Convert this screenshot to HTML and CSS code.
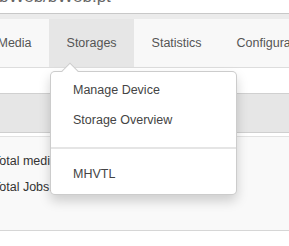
FILE: index.html
```html
<!DOCTYPE html>
<html lang="en">
<head>
  <meta charset="UTF-8">
  <title>Storages</title>
  <link rel="stylesheet" href="styles.css">
</head>
<body>
  <div class="title"><span>bWeb/bWeb.pt</span></div>
  <div class="topline"></div>

  <ul class="nav">
    <li class="tab">Media</li>
    <li class="tab active">Storages</li>
    <li class="tab">Statistics</li>
    <li class="tab">Configuration</li>
  </ul>

  <div class="content">
    <div class="panel-head"></div>
    <div class="panel-body">
      <div class="stat">Total media:</div>
      <div class="stat">Total Jobs:</div>
    </div>
  </div>

  <!-- open Storages menu -->
  <div class="dropdown">
    <span class="caret"></span>
    <a class="item">Manage Device</a>
    <a class="item">Storage Overview</a>
    <div class="divider"></div>
    <a class="item">MHVTL</a>
  </div>
</body>
</html>
```

FILE: styles.css
```css
body {
  margin: 0;
  font-family: "Liberation Sans", Arial, sans-serif;
  font-size: 12.5px;
  color: #333;
  background: #fff;
  overflow: hidden;
}

.title {
  height: 13px;
  overflow: hidden;
}

.title span {
  display: block;
  margin-top: -13px;
  margin-left: -1px;
  font-size: 17px;
  line-height: 20px;
  color: #666;
}

.topline {
  height: 5px;
  border-top: 1px solid #c8c8c8;
  background: #ebebeb;
}

.nav {
  display: flex;
  margin: 0 0 0 -20px;
  padding: 0;
  list-style: none;
  height: 48px;
  background: #f8f8f8;
  border-bottom: 1px solid #ddd;
  white-space: nowrap;
}

.tab {
  padding: 0 17.5px;
  line-height: 48px;
  color: #555;
}

.tab.active {
  background: #e6e6e6;
}

.content {
  padding-top: 25px;
}

.panel-head {
  height: 38px;
  background: #e6e6e6;
  border-top: 1px solid #d0d0d0;
  border-bottom: 1px solid #cfcfcf;
}

.panel-body {
  margin-top: 3px;
  height: 95px;
  padding-top: 11px;
  background: #f9f9f9;
  border-top: 1px solid #e2e2e2;
  border-bottom: 1px solid #d6d6d6;
  box-sizing: border-box;
}

.stat {
  margin-left: -7px;
  line-height: 26px;
  color: #333;
}

.dropdown {
  position: absolute;
  left: 50px;
  top: 71px;
  width: 187px;
  padding: 3px 0 5px;
  background: #fff;
  border: 1px solid rgba(0, 0, 0, 0.2);
  border-radius: 5px;
  box-shadow: 0 6px 12px rgba(0, 0, 0, 0.175);
  box-sizing: border-box;
}

.caret {
  position: absolute;
  left: 13px;
  top: -7px;
  width: 11px;
  height: 11px;
  background: #fff;
  border-top: 1px solid rgba(0, 0, 0, 0.2);
  border-left: 1px solid rgba(0, 0, 0, 0.2);
  transform: rotate(45deg);
}

.item {
  display: block;
  padding-left: 22px;
  line-height: 30px;
  color: #444;
}

.divider {
  height: 2px;
  margin: 12px 0 10px;
  background: #e5e5e5;
}
```
